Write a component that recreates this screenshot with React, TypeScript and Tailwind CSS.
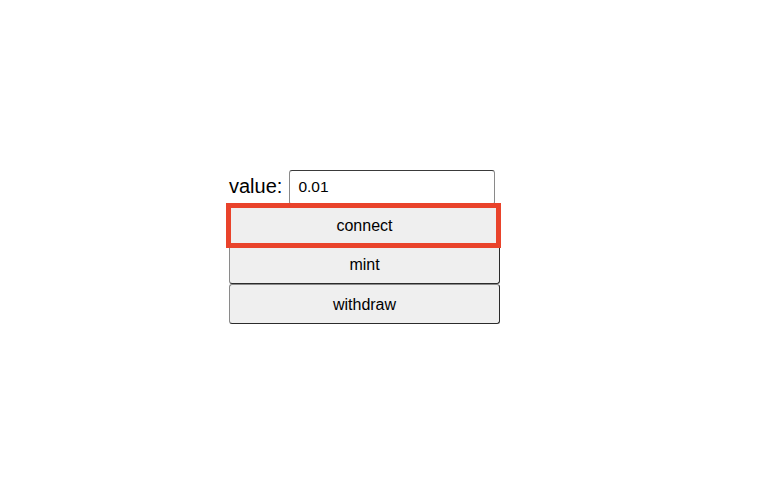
import React, { useState } from 'react';

const btn =
  'w-full h-[39px] bg-[#efefef] text-black text-[16px] border border-[#8a8a8a] border-r-[#2b2b2b] border-b-[#2b2b2b] rounded-[3px]';

const App: React.FC = () => {
  const [value, setValue] = useState('0.01');

  return (
    <div className="min-h-screen bg-white pt-[170px] pl-[229px]" style={{ fontFamily: '"Liberation Sans", Arial, sans-serif' }}>
      <div className="flex flex-col w-[271px]">
        {/* value input */}
        <div className="flex items-center h-[35px]">
          <label className="text-[20px] text-black mr-[7px] leading-none -mt-[3px]">value:</label>
          <input
            value={value}
            onChange={(e) => setValue(e.target.value)}
            className="w-[206px] h-[35px] px-[8px] pb-[2px] text-[15.5px] text-black bg-white border border-[#8a8a8a] border-t-[#3a3a3a] rounded-[3px] focus:outline-none"
          />
        </div>

        {/* connect, highlighted */}
        <div className="relative">
          <button className={btn + ' h-[40px] pt-[2px]'}>connect</button>
          <div className="absolute -left-[3px] -top-[2px] w-[275px] h-[45px] border-[5px] border-[#e9432b] pointer-events-none" />
        </div>
        <button className={btn + ' pt-[1px]'}>mint</button>
        <button className={btn + ' h-[40px] pt-[1px]'}>withdraw</button>
      </div>
    </div>
  );
};

export default App;
